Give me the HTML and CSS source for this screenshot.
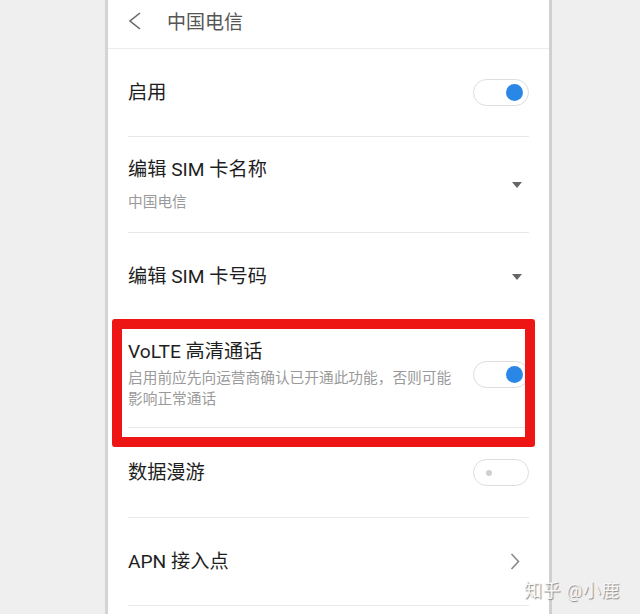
FILE: index.html
```html
<!DOCTYPE html>
<html lang="zh-CN">

<head>
    <meta charset="UTF-8">
    <meta name="viewport" content="width=device-width, initial-scale=1.0">
    <title>中国电信</title>
    <link rel="stylesheet" href="styles.css">
</head>

<body>

    <div class="screen">
        <!-- Top bar -->
        <div class="topbar">
            <svg class="back" width="16" height="18" viewBox="0 0 16 18">
                <path d="M13 1 L3 9 L13 17" fill="none" stroke="#666" stroke-width="1.6" />
            </svg>
            <span class="topbar-title">中国电信</span>
        </div>

        <div class="list">
            <div class="item">
                <div class="item-text">
                    <div class="item-title">启用</div>
                </div>
                <div class="switch on"><span class="knob"></span></div>
            </div>

            <div class="item item-tall">
                <div class="item-text">
                    <div class="item-title">编辑 SIM 卡名称</div>
                    <div class="item-sub">中国电信</div>
                </div>
                <span class="caret"></span>
            </div>

            <div class="item">
                <div class="item-text">
                    <div class="item-title">编辑 SIM 卡号码</div>
                </div>
                <span class="caret"></span>
            </div>

            <div class="item item-volte">
                <div class="item-text">
                    <div class="item-title">VoLTE 高清通话</div>
                    <div class="item-sub narrow">启用前应先向运营商确认已开通此功能，否则可能影响正常通话</div>
                </div>
                <div class="switch on"><span class="knob"></span></div>
                <!-- highlight frame -->
                <div class="mark"></div>
            </div>

            <div class="item item-roam">
                <div class="item-text">
                    <div class="item-title">数据漫游</div>
                </div>
                <div class="switch"><span class="knob"></span></div>
            </div>

            <div class="item item-apn">
                <div class="item-text">
                    <div class="item-title">APN 接入点</div>
                </div>
                <svg class="chevron" width="10" height="17" viewBox="0 0 10 17">
                    <path d="M1.5 1 L8.5 8.5 L1.5 16" fill="none" stroke="#888" stroke-width="1.6" />
                </svg>
            </div>

            <div class="item"></div>
        </div>
    </div>

    <div class="watermark">知乎 @小鹿</div>

</body>

</html>
```

FILE: styles.css
```css
body {
    font-family: Roboto, 'Noto Sans CJK SC', sans-serif;
    background-color: #efefef;
    margin: 0;
    padding: 0;
    height: 614px;
    overflow: hidden;
}

.screen {
    margin-left: 105px;
    width: 441px;
    height: 614px;
    background-color: #ffffff;
    border-left: 3px solid #d4d4d4;
    border-right: 3px solid #d0d0d0;
    overflow: hidden;
}

.topbar {
    display: flex;
    align-items: center;
    height: 41px;
    padding-bottom: 7px;
    border-bottom: 1px solid #ececec;
}

.back {
    margin-left: 19px;
}

.topbar-title {
    margin-left: 24px;
    font-size: 19px;
    color: #555555;
}

.item {
    position: relative;
    display: flex;
    align-items: center;
    justify-content: space-between;
    height: 87px;
    margin: 0 20px;
    border-bottom: 1px solid #e8e8e8;
}

.item-tall {
    height: 95px;
}

.item-volte {
    height: 106px;
}

.item-roam {
    height: 89px;
}

.item-title {
    font-size: 19.2px;
    line-height: 26px;
    color: #1e1e1e;
}

.item-sub {
    margin-top: 9px;
    font-size: 14.7px;
    line-height: 20px;
    color: #9a9a9a;
}

.item-sub.narrow {
    margin-top: 3px;
    line-height: 21px;
    max-width: 328px;
}

.switch {
    position: relative;
    width: 54px;
    height: 25px;
    border: 1.5px solid #dddddd;
    border-radius: 15px;
    flex-shrink: 0;
}

.knob {
    position: absolute;
    top: 50%;
    left: 12px;
    width: 6px;
    height: 6px;
    margin-top: -3px;
    border-radius: 50%;
    background-color: #cfcfcf;
}

.switch.on .knob {
    left: auto;
    right: 5px;
    width: 17px;
    height: 17px;
    margin-top: -8.5px;
    background-color: #2b87e6;
}

.caret {
    width: 0;
    height: 0;
    margin-right: 7px;
    border-left: 5.5px solid transparent;
    border-right: 5.5px solid transparent;
    border-top: 6px solid #666666;
}

.chevron {
    margin-right: 9px;
}

.mark {
    position: absolute;
    top: -2px;
    left: -16px;
    right: -6px;
    bottom: -20px;
    border: 10px solid #ee1515;
    border-radius: 3px;
}

.watermark {
    position: absolute;
    left: 524px;
    top: 576px;
    font-size: 18px;
    color: #f7f7f7;
    text-shadow: 1px 1px 1px #8a8a8a;
    letter-spacing: 0.5px;
}
```
